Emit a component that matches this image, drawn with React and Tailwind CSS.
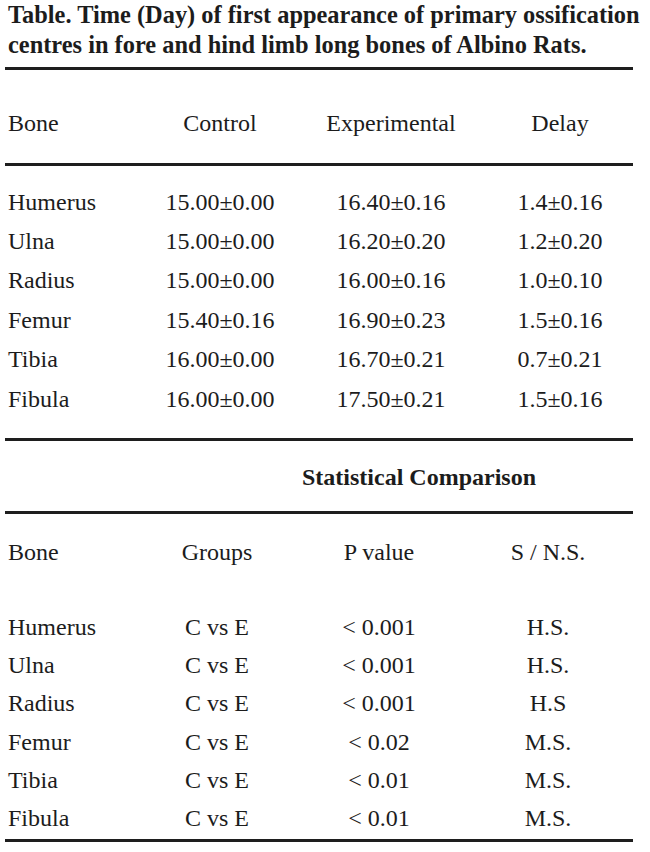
import React from 'react';

const GROWTH = [
  ['Humerus', '15.00±0.00', '16.40±0.16', '1.4±0.16'],
  ['Ulna', '15.00±0.00', '16.20±0.20', '1.2±0.20'],
  ['Radius', '15.00±0.00', '16.00±0.16', '1.0±0.10'],
  ['Femur', '15.40±0.16', '16.90±0.23', '1.5±0.16'],
  ['Tibia', '16.00±0.00', '16.70±0.21', '0.7±0.21'],
  ['Fibula', '16.00±0.00', '17.50±0.21', '1.5±0.16'],
];

const STATS = [
  ['Humerus', 'C vs E', '< 0.001', 'H.S.'],
  ['Ulna', 'C vs E', '< 0.001', 'H.S.'],
  ['Radius', 'C vs E', '< 0.001', 'H.S'],
  ['Femur', 'C vs E', '< 0.02', 'M.S.'],
  ['Tibia', 'C vs E', '< 0.01', 'M.S.'],
  ['Fibula', 'C vs E', '< 0.01', 'M.S.'],
];

function Rule({ className = '' }) {
  return <div className={`h-[3px] bg-[#1e1e1e] ${className}`} />;
}

function GrowthRow({ cells, h = 'h-[39.4px]' }) {
  return (
    <div className={`grid grid-cols-[125px_180px_162px_161px] items-center ${h}`}>
      <div className="pl-[3px]">{cells[0]}</div>
      <div className="text-center">{cells[1]}</div>
      <div className="text-center">{cells[2]}</div>
      <div className="text-center pl-[15px]">{cells[3]}</div>
    </div>
  );
}

function StatRow({ cells, h = 'h-[38.4px]' }) {
  return (
    <div className={`grid grid-cols-[125px_174px_150px_179px] items-center ${h}`}>
      <div className="pl-[3px]">{cells[0]}</div>
      <div className="text-center">{cells[1]}</div>
      <div className="text-center">{cells[2]}</div>
      <div className="text-center pl-[9px]">{cells[3]}</div>
    </div>
  );
}

export default function App() {
  return (
    <div className="w-[650px] h-[852px] overflow-hidden bg-white text-[#1c1c1c] font-['Liberation_Serif','Times_New_Roman',serif] text-[24px] leading-none">
      {/* caption */}
      <div className="pl-[8px] font-bold text-[24.4px] leading-[30px] whitespace-nowrap">
        <div>Table. Time (Day) of first appearance of primary ossification</div>
        <div>centres in fore and hind limb long bones of Albino Rats.</div>
      </div>

      <div className="w-[628px] ml-[5px]">
        <Rule className="mt-[7px]" />
        <div className="mt-[33px]">
          <GrowthRow cells={['Bone', 'Control', 'Experimental', 'Delay']} h="h-[40px]" />
        </div>
        <Rule className="mt-[20px]" />
        <div className="mt-[16px]">
          {GROWTH.map((r) => (
            <GrowthRow key={r[0]} cells={r} />
          ))}
        </div>
        <Rule className="mt-[20px]" />

        <div className="mt-[16px] h-[40px] flex items-center pl-[297px] font-bold whitespace-nowrap">
          Statistical Comparison
        </div>
        <Rule className="mt-[14px]" />
        <div className="mt-[18px]">
          <StatRow cells={['Bone', 'Groups', 'P value', 'S / N.S.']} h="h-[40px]" />
        </div>
        <div className="mt-[35px]">
          {STATS.map((r) => (
            <StatRow key={r[0]} cells={r} />
          ))}
        </div>
        <Rule className="mt-[1px]" />
      </div>
    </div>
  );
}
